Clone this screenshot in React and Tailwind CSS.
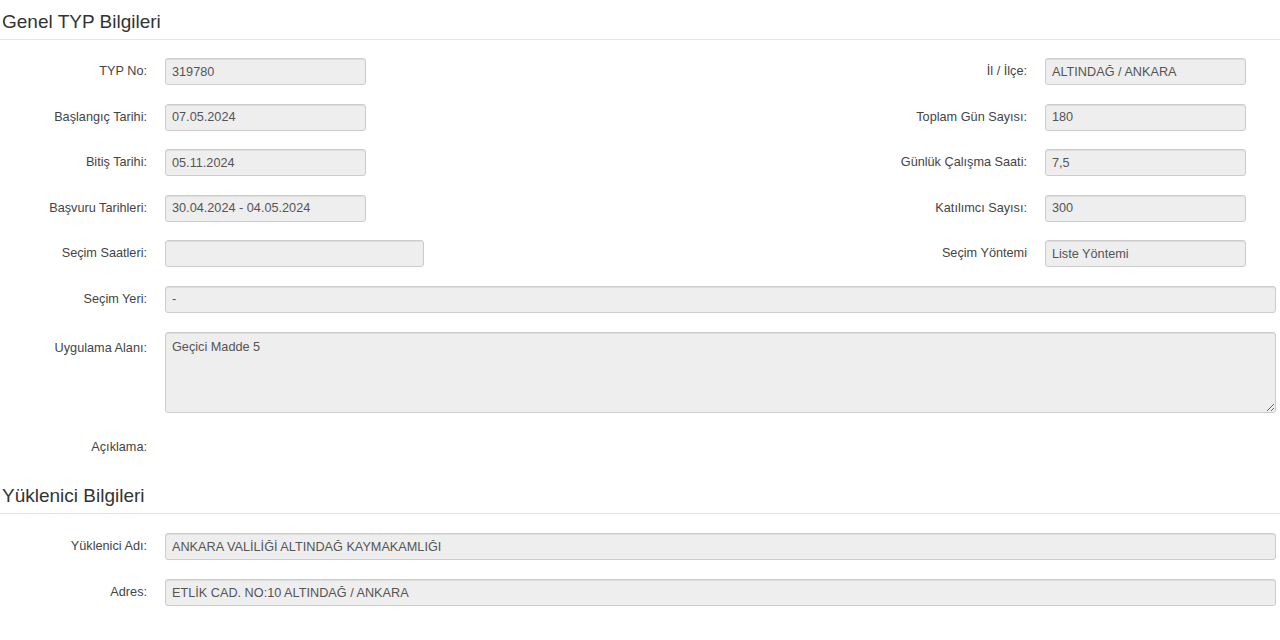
import React from "react";

const inputCls =
  "h-[27px] rounded-[3px] border border-[#cccccc] bg-[#eeeeee] pl-[6px] text-[12.7px] text-[#555555] shadow-[inset_0_1px_1px_rgba(0,0,0,0.075)] outline-none";

const Label = ({ children, className = "" }) => (
  <label className={`text-right text-[12.7px] font-normal text-[#444444] ${className}`}>{children}</label>
);

const Field = ({ value, className = "" }) => (
  <input readOnly value={value} className={`${inputCls} ${className}`} />
);

// two fields on one line: left pair and right pair
const PairRow = ({ left, right }) => (
  <div className="flex h-[27px] items-center">
    <Label className="w-[147px]">{left.label}</Label>
    <Field value={left.value} className={`ml-[18px] ${left.wide ? "w-[259px]" : "w-[201px]"}`} />
    <div className="ml-auto mr-[34px] flex items-center">
      <Label>{right.label}</Label>
      <Field value={right.value} className="ml-[18px] w-[201px]" />
    </div>
  </div>
);

const WideRow = ({ label, value }) => (
  <div className="flex h-[27px] items-center">
    <Label className="w-[147px]">{label}</Label>
    <Field value={value} className="ml-[18px] mr-[4px] flex-1" />
  </div>
);

const SectionTitle = ({ children, className = "" }) => (
  <div
    className={`border-b border-[#e5e5e5] pb-[7px] pl-[2px] pt-[11px] text-[19px] leading-[21px] text-[#333333] ${className}`}
  >
    {children}
  </div>
);

export default function App() {
  return (
    <div className="min-h-[640px] bg-white font-['Liberation_Sans',Arial,sans-serif]">
      <SectionTitle>Genel TYP Bilgileri</SectionTitle>

      <div className="mt-[18px] flex flex-col gap-[18.6px]">
        <PairRow left={{ label: "TYP No:", value: "319780" }} right={{ label: "İl / İlçe:", value: "ALTINDAĞ / ANKARA" }} />
        <PairRow
          left={{ label: "Başlangıç Tarihi:", value: "07.05.2024" }}
          right={{ label: "Toplam Gün Sayısı:", value: "180" }}
        />
        <PairRow
          left={{ label: "Bitiş Tarihi:", value: "05.11.2024" }}
          right={{ label: "Günlük Çalışma Saati:", value: "7,5" }}
        />
        <PairRow
          left={{ label: "Başvuru Tarihleri:", value: "30.04.2024 - 04.05.2024" }}
          right={{ label: "Katılımcı Sayısı:", value: "300" }}
        />
        <PairRow
          left={{ label: "Seçim Saatleri:", value: "", wide: true }}
          right={{ label: "Seçim Yöntemi", value: "Liste Yöntemi" }}
        />
        <WideRow label="Seçim Yeri:" value="-" />

        <div className="flex">
          <Label className="w-[147px] pt-[7px]">Uygulama Alanı:</Label>
          <textarea
            readOnly
            defaultValue="Geçici Madde 5"
            className={`${inputCls} ml-[18px] mr-[4px] h-[81px] flex-1 pt-[6px] leading-[16px]`}
          />
        </div>

        <div className="flex h-[27px]">
          <Label className="w-[147px] pt-[7px]">Açıklama:</Label>
        </div>
      </div>

      <SectionTitle className="mt-[16px]">Yüklenici Bilgileri</SectionTitle>

      <div className="mt-[19px] flex flex-col gap-[19px]">
        <WideRow label="Yüklenici Adı:" value="ANKARA VALİLİĞİ ALTINDAĞ KAYMAKAMLIĞI" />
        <WideRow label="Adres:" value="ETLİK CAD. NO:10 ALTINDAĞ / ANKARA" />
      </div>
    </div>
  );
}
